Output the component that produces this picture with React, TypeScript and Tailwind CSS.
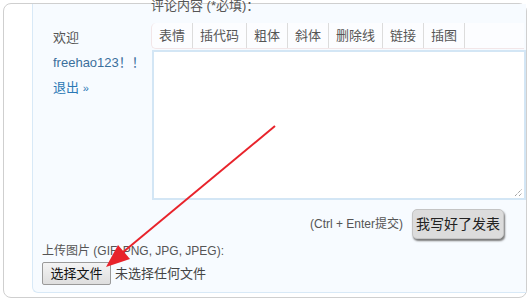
const cjk = "font-['Liberation_Sans','Noto_Sans_CJK_SC',sans-serif]";

const tools = ["表情", "插代码", "粗体", "斜体", "删除线", "链接", "插图"];

function Arrow() {
  return (
    <svg className="absolute left-0 top-0 pointer-events-none" width="530" height="300">
      <line x1="275" y1="126" x2="122" y2="253" stroke="#e8232b" strokeWidth="2" />
      <polygon points="106,267 118,245 130,259" fill="#e8232b" />
    </svg>
  );
}

export default function App() {
  return (
    <div className={`relative w-[530px] h-[300px] bg-white overflow-hidden ${cjk}`}>
      <div className="ml-[3px] mt-[3px] w-[524px] h-[295px] border border-[#cfcfcf] rounded-[8px] pl-[28px] pb-[4px] flex">
        <div className="flex-1 flex flex-col bg-[#f7fbff] border-l border-b border-[#d8e9f7] rounded-bl-[6px]">
          <div className="flex">
            <div className="w-[118px] pl-[20px] pt-[21px] flex flex-col text-[13px] leading-[25px]">
              <span className="text-[#555]">欢迎</span>
              <span className="text-[#3b6f9c]">freehao123！！</span>
              <span className="text-[#2a78b5]">
                退出 <span className="text-[11px]">»</span>
              </span>
            </div>
            <div className="flex-1 flex flex-col">
              <div className="relative -mt-[7px] text-[13px] leading-[18px] text-[#555]">评论内容 (*必填)：</div>
              <div className="mt-[8px] flex h-[26px] items-stretch bg-[#fcfdff] border-b border-l border-[#f2e6e8] rounded-l-[5px] mr-[2px]">
                {tools.map((t) => (
                  <span
                    key={t}
                    className="px-[7px] border-r border-[#dcdcdc] text-[13px] leading-[26px] text-[#555]"
                  >
                    {t}
                  </span>
                ))}
              </div>
              <div className="relative mt-[1px] h-[150px] ml-[1px] bg-white border-2 border-[#d3e6f5]">
                <svg className="absolute right-[1px] bottom-[1px]" width="9" height="9">
                  <line x1="1" y1="8" x2="8" y2="1" stroke="#777" strokeWidth="1" strokeDasharray="1 1" />
                  <line x1="5" y1="8" x2="8" y2="5" stroke="#777" strokeWidth="1" strokeDasharray="1 1" />
                </svg>
              </div>
            </div>
          </div>
          <div className="mt-[9px] flex items-center justify-end pr-[22px]">
            <span className="text-[12px] text-[#555] mr-[9px]">(Ctrl + Enter提交)</span>
            <button className="h-[30px] px-[3px] bg-[#dcdcdc] border border-[#c4c4c4] rounded-[5px] shadow-[1px_2px_2px_#777] text-[14px] text-[#222]">
              我写好了发表
            </button>
          </div>
          <div className="pl-[9px] mt-[4px] text-[12px] leading-[16px] text-[#555]">上传图片 (GIF, PNG, JPG, JPEG):</div>
          <div className="pl-[9px] mt-[3px] flex items-center">
            <button className="h-[23px] w-[69px] bg-gradient-to-b from-[#f4f4f4] to-[#dedede] border border-[#9a9a9a] rounded-[2px] text-[13px] text-[#111]">
              选择文件
            </button>
            <span className="ml-[4px] text-[13px] text-[#444]">未选择任何文件</span>
          </div>
        </div>
      </div>
      <Arrow />
    </div>
  );
}
